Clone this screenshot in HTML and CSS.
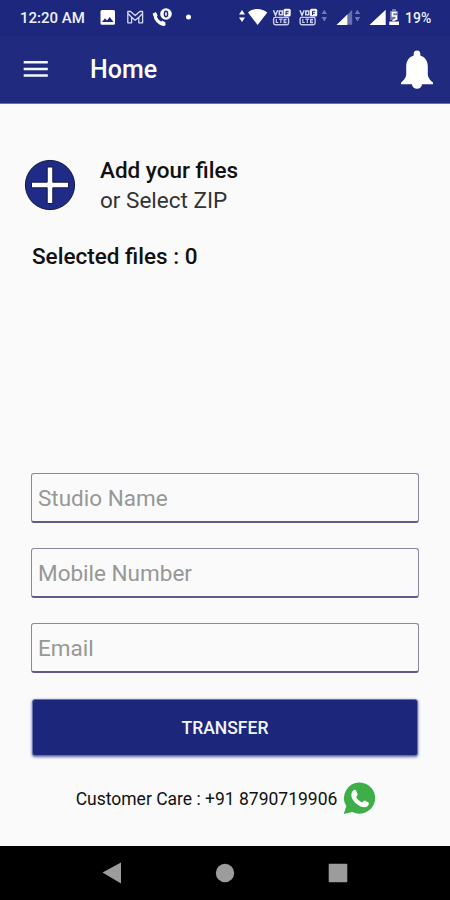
FILE: index.html
```
<!DOCTYPE html>
<html lang="en">
<head>
<meta charset="utf-8">
<title>Home</title>
<link rel="stylesheet" href="styles.css">
</head>
<body>
<div class="screen">
  <div class="status">
    <span class="time">12:20 AM</span>
    <svg class="notices" width="96" height="36" viewBox="98 0 96 36">
      <path fill="#fff" fill-rule="evenodd" d="M102 10h11.500a1.500 1.500 0 0 1 1.500 1.500v11.800a1.500 1.500 0 0 1-1.500 1.500H102a1.500 1.500 0 0 1-1.500-1.500V11.500A1.500 1.500 0 0 1 102 10zm0 12h11.500l-3.800-5-2.700 3.500-2-2.200z"/>
      <path fill="none" stroke="#d5daf5" stroke-width="1.300" stroke-linejoin="round" d="M127.800 11.500h2.800l4.600 4 4.600-4h2.800v11.300h-3.800v-5.600l-3.600 3-3.600-3v5.600h-3.800zM131.600 17.200l-3.400-3.400M138.800 17.200l3.600-3.400"/>
      <path fill="none" stroke="#fff" stroke-width="3.300" stroke-linecap="round" d="M155 14.800c.4 4.800 4 8.800 9 9.500"/>
      <path fill="none" stroke="#fff" stroke-width="4" d="M153.500 15.500l3.300-1.800M161.800 25l2-3.500"/>
      <circle cx="166" cy="14" r="5.800" fill="#fff"/>
      <ellipse cx="166" cy="14" rx="1.600" ry="2.700" fill="none" stroke="#1c277d" stroke-width="1.400"/>
      <circle cx="188.500" cy="17" r="2.500" fill="#fff"/>
    </svg>
    <svg class="signals" width="164" height="36" viewBox="237 0 164 36">
      <path fill="#fff" d="M239 14.500l3-4.500 3 4.500zM239 17.500h6l-3 4.500zM248 12.500c5-4.700 14-4.700 19.300 0L257.600 25z"/>
      <g id="volte">
        <path fill="none" stroke="#d5daf5" stroke-width="1.500" d="M273.500 10.200l2 5 2.200-5M279.300 11h3v3.800h-3z"/>
        <rect x="283.500" y="8.800" width="7.200" height="7.700" rx="1.500" fill="#f5f6ff"/>
        <path stroke="#1c277d" fill="none" d="M286 15v-3.700h2.700M286 13.300h2.400"/>
        <rect x="273.600" y="17.400" width="15" height="7.300" rx="1.700" fill="none" stroke="#c5cbed" stroke-width="1.400"/>
        <path fill="none" stroke="#c5cbed" stroke-width="1.200" d="M276.300 19v3.500h2M279 19.200h3.600M280.800 19v4M286.600 19.300h-2.500v3.400h2.500M284.200 21h2.200"/>
      </g>
      <use href="#volte" x="26.500"/>
      <path fill="#7179b3" d="M321.500 14l2.800-4.200L327 14zM321.500 17h5.500l-2.700 4.500z"/>
      <path fill="#6670ac" d="M346.500 15.500l5.700-5.700v15h-5.700z"/>
      <path fill="#fff" d="M336.500 25l10.800-10.500V25z"/>
      <path fill="#7179b3" d="M354.700 14l2.700-4.200 2.800 4.200zM354.700 17h5.500l-2.800 4.500zM390 11h2v-2h4v2h2v9h-8z"/>
      <path fill="#fff" d="M369.500 25L385.700 9.800V25zM389.300 21.500h9.700v3.500h-9.700z"/>
      <path fill="none" stroke="#fff" stroke-width="1.600" d="M396.800 12.500h-4.300v3.500h3.700v3.200l-3.700 1.600"/>
    </svg>
    <span class="battery">19%</span>
  </div>
  <header class="appbar">
    <svg width="26" height="20" viewBox="0 0 26 20"><path stroke="#f3f7ff" stroke-width="2.500" d="M.7 2.300h24.100M.7 9h24.100M.7 15.500h24.100"/></svg>
    <h1 class="title">Home</h1>
    <svg class="bell" width="34" height="40" viewBox="0 0 34 40"><path fill="#fff" d="M17 .6c2 0 3.300 1.200 3.300 3.200v1.700c4.700 1.400 7.500 5.300 7.500 11v7.800c0 3 2.500 6.500 5.200 8.200v1.700H22a5 4.500 0 0 1-10 0H1v-1.700c2.700-1.700 5.200-5.200 5.200-8.200v-7.800c0-5.700 2.800-9.600 7.500-11V3.800C13.700 1.800 15 .6 17 .6z"/></svg>
  </header>
  <main class="content">
    <div class="add">
      <svg width="52" height="52" viewBox="0 0 52 52"><circle cx="26" cy="26" r="24.600" fill="#202b88" stroke="#15193f"/><path fill="#fff" stroke="#15193f" d="M23.200 8h5.600v15.200h15.700v5.600H28.800V44.500h-5.600V28.800H7.500v-5.600h15.700z"/></svg>
      <div>
        <div class="add-title">Add your files</div>
        <div class="add-sub">or Select ZIP</div>
      </div>
    </div>
    <div class="selected">Selected files : 0</div>
    <form class="form">
      <div class="field"><span>Studio Name</span></div>
      <div class="field"><span>Mobile Number</span></div>
      <div class="field"><span>Email</span></div>
      <button class="transfer" type="button"><span>TRANSFER</span></button>
    </form>
    <div class="care">
      <span>Customer Care : +91 8790719906</span>
      <svg width="34" height="34" viewBox="0 0 34 34"><path fill="#3eae49" d="M17.500 1.500a15.600 15.600 0 1 1-7.200 29.400L1.700 33l2.600-7.800A15.600 15.600 0 0 1 17.500 1.500z"/><path fill="#fff" d="M11.700 9c.7-.4 1.800-.4 2.200.3l1.700 3.900c.3.800-1.100 2-1.500 2.600 1.300 2.800 3.400 4.600 6.100 5.700.7-.5 1.700-2.300 2.500-2l3.600 1.800c1.200.6.300 3-.6 3.800-2 1.700-4.700 1.300-7 .4-4.300-1.700-7.500-5-9-8.900-.8-2.800-.3-6 2-7.600z"/></svg>
    </div>
  </main>
  <nav class="nav">
    <svg width="20" height="24" viewBox="0 0 20 24"><path fill="#9c9c9c" d="M.5 11.500L19 1.500v21z"/></svg>
    <svg width="20" height="24" viewBox="0 0 20 24"><circle cx="10" cy="12" r="9.200" fill="#9c9c9c"/></svg>
    <svg width="20" height="24" viewBox="0 0 20 24"><rect x=".7" y="2.700" width="18.600" height="18.600" rx="1" fill="#9c9c9c"/></svg>
  </nav>
</div>
</body>
</html>
```
FILE: styles.css
```
* { box-sizing: border-box; }
body { margin: 0; font-family: Roboto, sans-serif; background: #fafafa; }
svg { display: block; flex: none; }
span { white-space: nowrap; }
.screen { width: 450px; height: 900px; display: flex; flex-direction: column; }
.status { height: 36px; flex: none; display: flex; align-items: center; background: #1c277d; color: #eef1ff; font-size: 15px; font-weight: 500; padding-left: 20px; }
.time { width: 78px; }
.signals { margin-left: 43px; }
.battery { margin-left: 4px; font-size: 14px; }
.appbar { height: 68px; flex: none; display: flex; align-items: center; padding: 0 16px 0 23px; background: #202b80; border-bottom: 1px solid #6c7299; }
.title { margin: 0 0 0 41px; font-size: 25px; line-height: 28px; font-weight: 500; color: #fff; }
.bell { margin-left: auto; }
.content { flex: 1; display: flex; flex-direction: column; padding: 51px 31px 0; color: #111; }
.add { display: flex; gap: 24px; margin-left: -7px; height: 60px; align-items: center; }
.add-title { font-size: 22.500px; font-weight: 550; line-height: 30px; }
.add-sub { font-size: 22.500px; line-height: 31px; color: #333; }
.selected { margin: 26px 0 0 1px; font-size: 22.500px; line-height: 30px; font-weight: 550; }
.form { margin-top: 202px; display: flex; flex-direction: column; gap: 25px; }
.field { height: 50px; display: flex; align-items: center; padding: 0 0 0 6px; border: 1.500px solid #8786a6; border-bottom: 2px solid #5d5b8b; border-radius: 3px; color: #979797; font-size: 22.500px; }
.transfer { height: 57px; margin: 1px 1px 0; padding: 1px 0 0; border: 1px solid #6a70ad; border-radius: 3px; background: #1c277c; color: #f1f4ff; font-family: inherit; font-weight: 550; font-size: 17.500px; box-shadow: 0 1px 3px #5b62a4; }
.care { display: flex; align-items: center; justify-content: center; gap: 5px; margin: 25px -2px 0 0; font-size: 17.500px; }
.care span { padding-top: 2px; }
.nav { height: 54px; flex: none; background: #000; display: flex; justify-content: center; align-items: center; gap: 93px; }
```
